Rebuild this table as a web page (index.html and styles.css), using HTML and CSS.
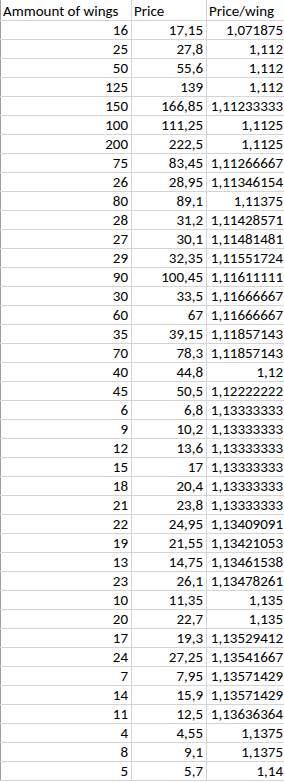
FILE: index.html
```html
<!DOCTYPE html>
<html>
<head>
<meta charset="utf-8">
<link rel="stylesheet" href="styles.css">
</head>
<body>
<table class="sheet">
<colgroup><col class="c1"><col class="c2"><col class="c3"></colgroup>
<thead>
<tr class="head"><th>Ammount of wings</th><th>Price</th><th>Price/wing</th></tr>
</thead>
<tbody>
<tr><td>16</td><td>17,15</td><td>1,071875</td></tr>
<tr><td>25</td><td>27,8</td><td>1,112</td></tr>
<tr><td>50</td><td>55,6</td><td>1,112</td></tr>
<tr><td>125</td><td>139</td><td>1,112</td></tr>
<tr><td>150</td><td>166,85</td><td>1,11233333</td></tr>
<tr><td>100</td><td>111,25</td><td>1,1125</td></tr>
<tr><td>200</td><td>222,5</td><td>1,1125</td></tr>
<tr><td>75</td><td>83,45</td><td>1,11266667</td></tr>
<tr><td>26</td><td>28,95</td><td>1,11346154</td></tr>
<tr><td>80</td><td>89,1</td><td>1,11375</td></tr>
<tr><td>28</td><td>31,2</td><td>1,11428571</td></tr>
<tr><td>27</td><td>30,1</td><td>1,11481481</td></tr>
<tr><td>29</td><td>32,35</td><td>1,11551724</td></tr>
<tr><td>90</td><td>100,45</td><td>1,11611111</td></tr>
<tr><td>30</td><td>33,5</td><td>1,11666667</td></tr>
<tr><td>60</td><td>67</td><td>1,11666667</td></tr>
<tr><td>35</td><td>39,15</td><td>1,11857143</td></tr>
<tr><td>70</td><td>78,3</td><td>1,11857143</td></tr>
<tr><td>40</td><td>44,8</td><td>1,12</td></tr>
<tr><td>45</td><td>50,5</td><td>1,12222222</td></tr>
<tr><td>6</td><td>6,8</td><td>1,13333333</td></tr>
<tr><td>9</td><td>10,2</td><td>1,13333333</td></tr>
<tr><td>12</td><td>13,6</td><td>1,13333333</td></tr>
<tr><td>15</td><td>17</td><td>1,13333333</td></tr>
<tr><td>18</td><td>20,4</td><td>1,13333333</td></tr>
<tr><td>21</td><td>23,8</td><td>1,13333333</td></tr>
<tr><td>22</td><td>24,95</td><td>1,13409091</td></tr>
<tr><td>19</td><td>21,55</td><td>1,13421053</td></tr>
<tr><td>13</td><td>14,75</td><td>1,13461538</td></tr>
<tr><td>23</td><td>26,1</td><td>1,13478261</td></tr>
<tr><td>10</td><td>11,35</td><td>1,135</td></tr>
<tr><td>20</td><td>22,7</td><td>1,135</td></tr>
<tr><td>17</td><td>19,3</td><td>1,13529412</td></tr>
<tr><td>24</td><td>27,25</td><td>1,13541667</td></tr>
<tr><td>7</td><td>7,95</td><td>1,13571429</td></tr>
<tr><td>14</td><td>15,9</td><td>1,13571429</td></tr>
<tr><td>11</td><td>12,5</td><td>1,13636364</td></tr>
<tr><td>4</td><td>4,55</td><td>1,1375</td></tr>
<tr><td>8</td><td>9,1</td><td>1,1375</td></tr>
<tr><td>5</td><td>5,7</td><td>1,14</td></tr>
</tbody>
</table>
</body>
</html>
```
FILE: styles.css
```css
html, body {
  margin: 0;
  padding: 0;
  background: #ffffff;
  overflow: hidden;
}
.sheet {
  border-collapse: collapse;
  table-layout: fixed;
  width: 286px;
  font-family: Carlito, Calibri, "Liberation Sans", sans-serif;
  font-size: 15px;
  color: #000000;
  border-left: 1px solid #9e9e9e;
}
.c1 { width: 131px; }
.c2 { width: 75px; }
.c3 { width: 80px; }
.sheet th, .sheet td {
  height: 18px;
  padding: 0 3px 0 3px;
  line-height: 15px;
  vertical-align: bottom;
  border-right: 1px solid #d4d4d4;
  border-bottom: 1px solid #d4d4d4;
  white-space: nowrap;
  overflow: hidden;
  box-sizing: border-box;
  padding-bottom: 1px;
}
.sheet td {
  text-align: right;
  height: 19px;
}
.sheet th {
  font-weight: normal;
  text-align: left;
  height: 20px;
  padding-left: 2px;
}
```
